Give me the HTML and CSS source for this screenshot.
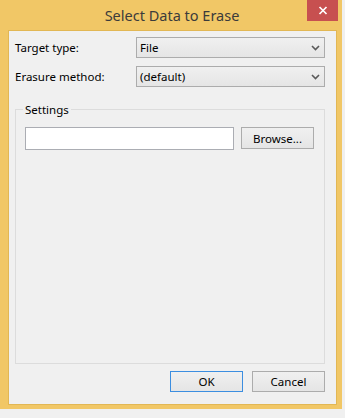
FILE: index.html
```html
<!DOCTYPE html>
<html lang="en">

<head>
    <meta charset="UTF-8">
    <meta name="viewport" content="width=device-width, initial-scale=1.0">
    <title>Select Data to Erase</title>
    <link rel="stylesheet" href="styles.css">
</head>

<body>
    <div class="window">
        <div class="titlebar">
            <span></span>
            <span class="title">Select Data to Erase</span>
            <button class="close" title="Close">
                <svg width="10" height="9" viewBox="0 0 10 9">
                    <path d="M1.5 1 L8.5 8 M8.5 1 L1.5 8" stroke="#fff" stroke-width="1.7" fill="none" />
                </svg>
            </button>
        </div>

        <div class="client">
            <div class="row">
                <label for="target">Target type:</label>
                <div class="combo" id="target">
                    <span>File</span>
                    <svg width="9" height="6" viewBox="0 0 9 6">
                        <path d="M1 1 L4.5 4.5 L8 1" stroke="#5a5a5a" stroke-width="1.6" fill="none" />
                    </svg>
                </div>
            </div>

            <div class="row">
                <label for="method">Erasure method:</label>
                <div class="combo" id="method">
                    <span>(default)</span>
                    <svg width="9" height="6" viewBox="0 0 9 6">
                        <path d="M1 1 L4.5 4.5 L8 1" stroke="#5a5a5a" stroke-width="1.6" fill="none" />
                    </svg>
                </div>
            </div>

            <fieldset class="settings">
                <legend>Settings</legend>
                <div class="file-row">
                    <input type="text" class="path">
                    <button class="btn browse">Browse...</button>
                </div>
            </fieldset>

            <div class="actions">
                <button class="btn default">OK</button>
                <button class="btn">Cancel</button>
            </div>
        </div>
    </div>
</body>

</html>
```

FILE: styles.css
```css
body {
    margin: 0;
    background-color: #f0f0f0;
    font-family: "Noto Sans", "Open Sans", sans-serif;
    font-size: 11.5px;
    color: #000;
}

.window {
    width: 342px;
    height: 409px;
    box-sizing: border-box;
    background-color: #f1c766;
    display: flex;
    flex-direction: column;
    padding: 0 5px 4px 8px;
}

.titlebar {
    height: 30px;
    display: grid;
    grid-template-columns: 1fr auto 1fr;
    margin-left: -8px;
    margin-right: -5px;
}

.title {
    font-size: 14.5px;
    color: #3b3b3b;
    line-height: 30px;
    margin-left: 2px;
}

.close {
    justify-self: end;
    width: 31px;
    height: 21px;
    margin-right: 4px;
    border: none;
    padding: 0;
    background-color: #c75050;
    display: flex;
    align-items: center;
    justify-content: center;
}

.client {
    flex: 1;
    background-color: #f0f0f0;
    border: 1px solid #e2b754;
    display: flex;
    flex-direction: column;
    padding: 6px 11px 12px 6px;
}

.row {
    display: grid;
    grid-template-columns: 121px 1fr;
    align-items: center;
    margin-bottom: 8px;
}

.combo {
    height: 21px;
    box-sizing: border-box;
    border: 1px solid #acacac;
    background: linear-gradient(#f0f0f0, #e5e5e5);
    display: flex;
    align-items: center;
    justify-content: space-between;
    padding: 0 4px 0 3px;
}

.settings {
    flex: 1;
    margin: 7px 0 0 0;
    border: 1px solid #dcdcdc;
    padding: 10px 10px 0 9px;
}

.settings legend {
    padding: 0 2px;
    margin-left: -2px;
}

.file-row {
    display: flex;
    gap: 7px;
    align-items: flex-start;
}

.path {
    width: 209px;
    height: 23px;
    box-sizing: border-box;
    margin: 0;
    border: 1px solid #abadb3;
    background-color: #fff;
}

.btn {
    width: 73px;
    height: 21px;
    box-sizing: border-box;
    border: 1px solid #acacac;
    background: linear-gradient(#f0f0f0, #e5e5e5);
    font-family: inherit;
    font-size: inherit;
    color: #000;
    padding: 0;
}

.browse {
    height: 22px;
}

.default {
    border-color: #3c8ee0;
}

.actions {
    display: flex;
    justify-content: flex-end;
    gap: 9px;
    margin-top: 7px;
}
```
